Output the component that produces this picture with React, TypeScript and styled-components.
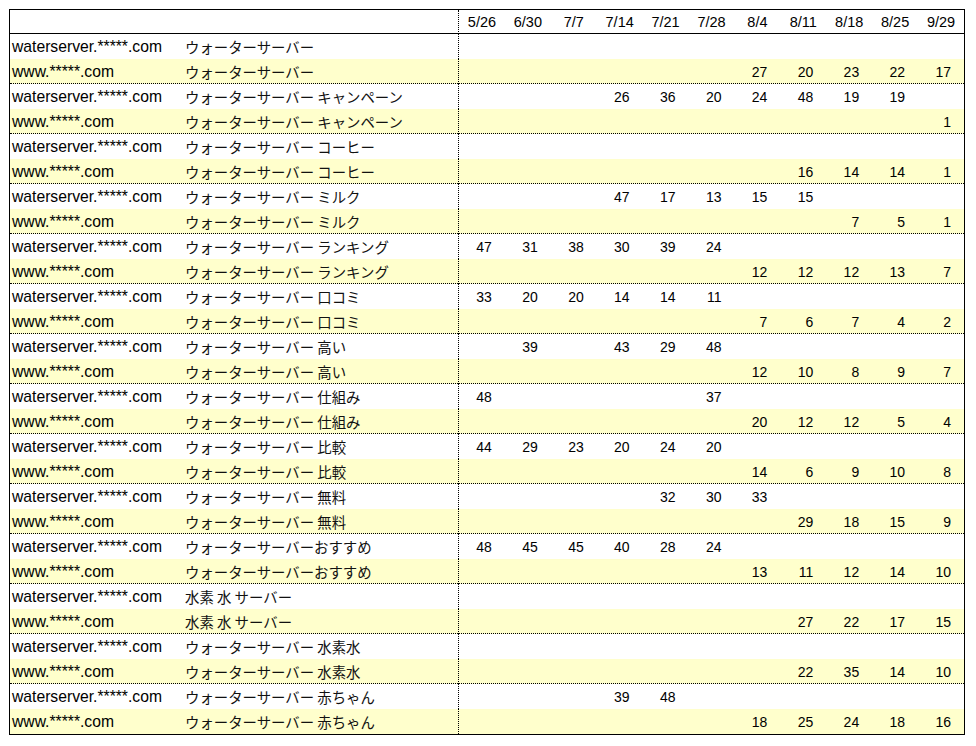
import React from "react";
import styled, { createGlobalStyle } from "styled-components";

const GlobalStyle = createGlobalStyle`
  html, body {
    margin: 0;
    padding: 0;
    background: #ffffff;
  }
`;

const DATES = ["5/26", "6/30", "7/7", "7/14", "7/21", "7/28", "8/4", "8/11", "8/18", "8/25", "9/29"];

type Val = number | null;
type Pair = { keyword: string; ws: Val[]; www: Val[] };

const _ = null;

const PAIRS: Pair[] = [
  { keyword: "ウォーターサーバー", ws: [_, _, _, _, _, _, _, _, _, _, _], www: [_, _, _, _, _, _, 27, 20, 23, 22, 17] },
  { keyword: "ウォーターサーバー キャンペーン", ws: [_, _, _, 26, 36, 20, 24, 48, 19, 19, _], www: [_, _, _, _, _, _, _, _, _, _, 1] },
  { keyword: "ウォーターサーバー コーヒー", ws: [_, _, _, _, _, _, _, _, _, _, _], www: [_, _, _, _, _, _, _, 16, 14, 14, 1] },
  { keyword: "ウォーターサーバー ミルク", ws: [_, _, _, 47, 17, 13, 15, 15, _, _, _], www: [_, _, _, _, _, _, _, _, 7, 5, 1] },
  { keyword: "ウォーターサーバー ランキング", ws: [47, 31, 38, 30, 39, 24, _, _, _, _, _], www: [_, _, _, _, _, _, 12, 12, 12, 13, 7] },
  { keyword: "ウォーターサーバー 口コミ", ws: [33, 20, 20, 14, 14, 11, _, _, _, _, _], www: [_, _, _, _, _, _, 7, 6, 7, 4, 2] },
  { keyword: "ウォーターサーバー 高い", ws: [_, 39, _, 43, 29, 48, _, _, _, _, _], www: [_, _, _, _, _, _, 12, 10, 8, 9, 7] },
  { keyword: "ウォーターサーバー 仕組み", ws: [48, _, _, _, _, 37, _, _, _, _, _], www: [_, _, _, _, _, _, 20, 12, 12, 5, 4] },
  { keyword: "ウォーターサーバー 比較", ws: [44, 29, 23, 20, 24, 20, _, _, _, _, _], www: [_, _, _, _, _, _, 14, 6, 9, 10, 8] },
  { keyword: "ウォーターサーバー 無料", ws: [_, _, _, _, 32, 30, 33, _, _, _, _], www: [_, _, _, _, _, _, _, 29, 18, 15, 9] },
  { keyword: "ウォーターサーバーおすすめ", ws: [48, 45, 45, 40, 28, 24, _, _, _, _, _], www: [_, _, _, _, _, _, 13, 11, 12, 14, 10] },
  { keyword: "水素 水 サーバー", ws: [_, _, _, _, _, _, _, _, _, _, _], www: [_, _, _, _, _, _, _, 27, 22, 17, 15] },
  { keyword: "ウォーターサーバー 水素水", ws: [_, _, _, _, _, _, _, _, _, _, _], www: [_, _, _, _, _, _, _, 22, 35, 14, 10] },
  { keyword: "ウォーターサーバー 赤ちゃん", ws: [_, _, _, 39, 48, _, _, _, _, _, _], www: [_, _, _, _, _, _, 18, 25, 24, 18, 16] },
];

const Page = styled.div`
  padding: 9px 0 0 9px;
`;

const Sheet = styled.div`
  width: 956px;
  box-sizing: border-box;
  border: 1px solid #000;
  font-family: "Liberation Sans", "Noto Sans CJK JP", sans-serif;
  color: #000;
`;

const gridCols = "173px 276px repeat(11, 1fr)";

const HeaderRow = styled.div`
  display: grid;
  grid-template-columns: ${gridCols};
  height: 24px;
  box-sizing: border-box;
  border-bottom: 1px solid #000;
`;

const Row = styled.div<{ $shaded?: boolean; $separator?: boolean }>`
  display: grid;
  grid-template-columns: ${gridCols};
  height: 25px;
  box-sizing: border-box;
  background: ${(p) => (p.$shaded ? "#ffffcc" : "#ffffff")};
  border-bottom: ${(p) => (p.$separator ? "1px dotted #000" : "none")};
`;

const DomainCell = styled.div`
  padding: 1px 0 0 2px;
  font-size: 15.7px;
  line-height: 24px;
  white-space: nowrap;
  overflow: hidden;
`;

const KeywordCell = styled.div`
  padding: 1px 0 0 2px;
  font-family: "Noto Sans CJK JP", sans-serif;
  font-size: 14.4px;
  line-height: 24px;
  color: #111;
  white-space: nowrap;
  overflow: hidden;
  border-right: 1px dotted #000;
`;

const DateCell = styled.div`
  padding-top: 1px;
  text-align: center;
  font-size: 14.5px;
  line-height: 23px;
  white-space: nowrap;
`;

const NumCell = styled.div`
  padding: 1px 13px 0 0;
  text-align: right;
  font-size: 14px;
  line-height: 24px;
`;

function DataRow({ domain, keyword, values, shaded, separator }: { domain: string; keyword: string; values: Val[]; shaded?: boolean; separator?: boolean }) {
  return (
    <Row $shaded={shaded} $separator={separator}>
      <DomainCell>{domain}</DomainCell>
      <KeywordCell>{keyword}</KeywordCell>
      {values.map((v, i) => (
        <NumCell key={i}>{v ?? ""}</NumCell>
      ))}
    </Row>
  );
}

export default function App() {
  return (
    <>
      <GlobalStyle />
      <Page>
        <Sheet>
          <HeaderRow>
            <div />
            <KeywordCell />
            {DATES.map((d) => (
              <DateCell key={d}>{d}</DateCell>
            ))}
          </HeaderRow>
          {PAIRS.map((p, i) => (
            <React.Fragment key={i}>
              <DataRow domain="waterserver.*****.com" keyword={p.keyword} values={p.ws} />
              <DataRow domain="www.*****.com" keyword={p.keyword} values={p.www} shaded separator={i < PAIRS.length - 1} />
            </React.Fragment>
          ))}
        </Sheet>
      </Page>
    </>
  );
}
